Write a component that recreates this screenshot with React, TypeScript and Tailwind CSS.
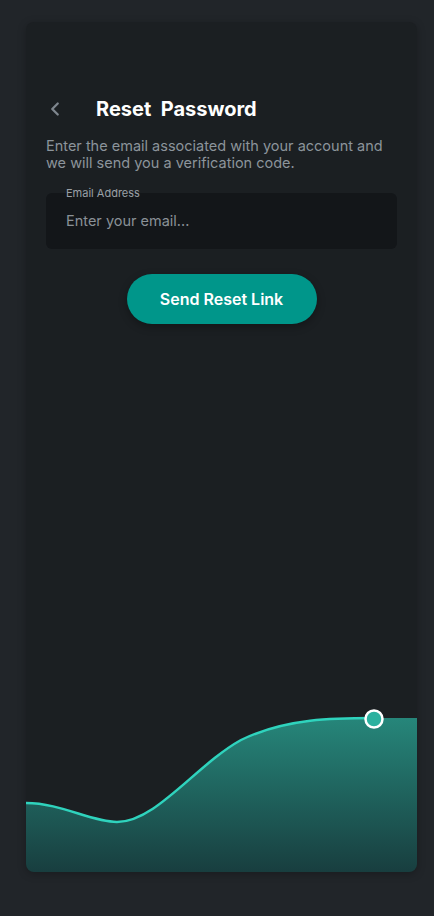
import { ChevronLeft } from "lucide-react";

const Wave = () => (
  <svg viewBox="0 0 391 172" className="block w-full h-[172px]" preserveAspectRatio="none">
    <defs>
      <linearGradient id="waveFill" x1="0" y1="0" x2="0" y2="1">
        <stop offset="0%" stopColor="#26867a" />
        <stop offset="100%" stopColor="#183e3f" />
      </linearGradient>
    </defs>
    <path
      d="M0,103 C35,103 65,122 91,122 C130,122 170,65 215,40 C260,18 310,18 348,18 L391,18 L391,172 L0,172 Z"
      fill="url(#waveFill)"
    />
    <path
      d="M0,103 C35,103 65,122 91,122 C130,122 170,65 215,40 C260,18 310,18 348,18"
      fill="none"
      stroke="#2fd3bd"
      strokeWidth="2.5"
    />
    <circle cx="348" cy="19" r="8.5" fill="#2bb19f" stroke="#ffffff" strokeWidth="2.5" />
  </svg>
);

export default function App() {
  return (
    <div
      className="min-h-[916px] w-full bg-[#212529] pt-[22px] pl-[26px]"
      style={{ fontFamily: "Inter, 'Noto Sans', sans-serif" }}
    >
      <div className="w-[391px] h-[850px] rounded-lg bg-[#1b1f22] shadow-[0_2px_8px_rgba(0,0,0,0.25)] overflow-hidden flex flex-col">
        <div className="pt-[73px] px-5">
          <div className="flex items-center h-7">
            <button className="text-[#7e868e] w-[52px] -ml-[2px] flex items-center">
              <ChevronLeft size={22} strokeWidth={2.5} />
            </button>
            <h1 className="text-white text-[20px] font-bold whitespace-pre">
              Reset  Password
            </h1>
          </div>
          <p className="mt-[14px] max-w-[345px] text-[14.5px] leading-[17px] text-[#8c949b]">
            Enter the email associated with your account and we will send you a verification code.
          </p>
          <div className="relative mt-[22px] h-[56px] rounded-md bg-[#131619] flex items-center px-5">
            <span className="absolute -top-[7px] left-5 text-[11px] leading-[14px] text-[#9aa0a6]">
              Email Address
            </span>
            <span className="text-[14.5px] text-[#8a9197]">Enter your email...</span>
          </div>
          <div className="flex justify-center mt-[25px]">
            <button className="w-[190px] h-[50px] rounded-full bg-[#00968a] text-white text-[16px] font-semibold shadow-[0_3px_8px_rgba(0,0,0,0.3)]">
              Send Reset Link
            </button>
          </div>
        </div>
        <div className="mt-auto">
          <Wave />
        </div>
      </div>
    </div>
  );
}
